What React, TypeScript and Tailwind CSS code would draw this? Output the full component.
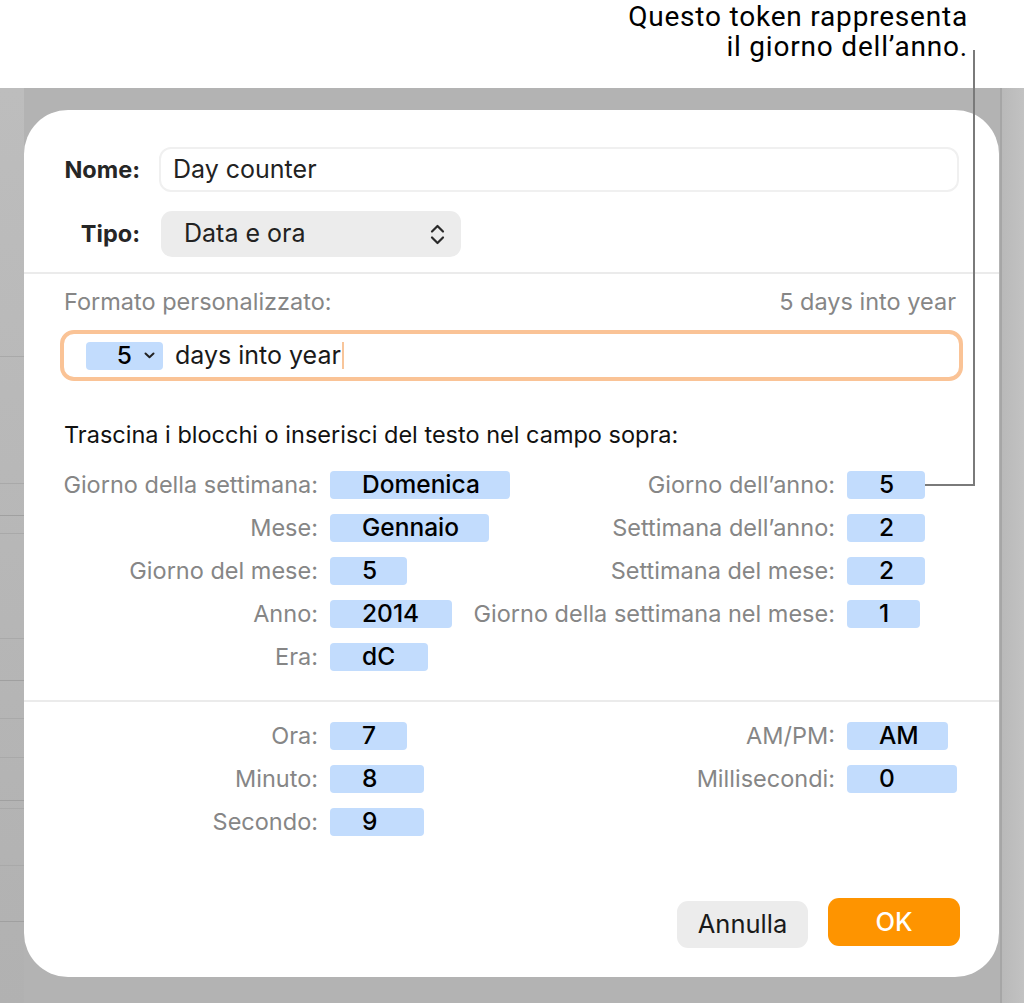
type Row = { l: string; t: string; tw: string; r?: string; rt?: string; rtw?: string };

const DATE_ROWS: Row[] = [
  { l: "Giorno della settimana:", t: "Domenica", tw: "w-[180px]", r: "Giorno dell’anno:", rt: "5", rtw: "w-[78px]" },
  { l: "Mese:", t: "Gennaio", tw: "w-[159px]", r: "Settimana dell’anno:", rt: "2", rtw: "w-[78px]" },
  { l: "Giorno del mese:", t: "5", tw: "w-[77px]", r: "Settimana del mese:", rt: "2", rtw: "w-[78px]" },
  { l: "Anno:", t: "2014", tw: "w-[122px]", r: "Giorno della settimana nel mese:", rt: "1", rtw: "w-[73px]" },
  { l: "Era:", t: "dC", tw: "w-[98px]" },
];

const TIME_ROWS: Row[] = [
  { l: "Ora:", t: "7", tw: "w-[77px]", r: "AM/PM:", rt: "AM", rtw: "w-[101px]" },
  { l: "Minuto:", t: "8", tw: "w-[94px]", r: "Millisecondi:", rt: "0", rtw: "w-[110px]" },
  { l: "Secondo:", t: "9", tw: "w-[94px]" },
];

function Token({ children, w }: { children: React.ReactNode; w: string }) {
  return (
    <span className={`flex h-[28px] items-center rounded-[4px] bg-[#c2dcfd] pl-[32px] text-[24.5px] font-medium text-black ${w}`}>
      {children}
    </span>
  );
}

function TokenGrid({ rows }: { rows: Row[] }) {
  return (
    <div className="grid grid-cols-[294px_minmax(0,1fr)_auto_152px] auto-rows-[43px] items-center gap-x-[12px]">
      {rows.map((r) => (
        <div key={r.l} className="contents">
          <span className="whitespace-nowrap text-right text-[23.5px] text-[#868686]">{r.l}</span>
          <Token w={r.tw}>{r.t}</Token>
          <span className="whitespace-nowrap text-right text-[23.5px] text-[#868686]">{r.r ?? ""}</span>
          {r.rt ? <Token w={r.rtw ?? ""}>{r.rt}</Token> : <span />}
        </div>
      ))}
    </div>
  );
}

// faint rows of the spreadsheet behind the sheet
const BG_LINES = [268, 395, 427, 445, 550, 592, 630, 669, 712, 720, 777, 833];

export default function App() {
  return (
    <div className="relative h-[1003px] w-[1024px] overflow-hidden bg-white font-[Inter,'Liberation_Sans',sans-serif]">
      {/* callout */}
      <div className="h-[88px] pr-[56px] pt-[2px] text-right font-[Roboto,'Liberation_Sans',sans-serif] text-[28px] leading-[30px] tracking-[0.8px] text-black">
        <p>
          Questo token rappresenta
          <br />
          il giorno dell’anno.
        </p>
      </div>

      <div className="flex h-[915px] bg-[#b3b3b3]">
        <div className="flex w-[24px] flex-col bg-gradient-to-b from-[#bdbdbd] to-[#b1b1b1]">
          {BG_LINES.map((y, i) => (
            <div key={y} className={i % 3 === 2 ? "h-[1px] bg-[#a0a0a0]" : "h-[1px] bg-[#a9a9a9]"} style={{ marginTop: i === 0 ? y : y - BG_LINES[i - 1] - 1 }} />
          ))}
        </div>

        <div className="mt-[22px] flex h-[867px] w-[975px] flex-col rounded-[44px] bg-white">
          {/* name / type */}
          <div className="flex items-center pr-[40px] pt-[37px]">
            <span className="w-[116px] text-right text-[23.5px] font-bold text-[#262626]">Nome:</span>
            <div className="ml-[19px] flex h-[45px] flex-1 items-center rounded-[12px] border-2 border-[#f0f0f0] pl-[12px] text-[25px] text-[#222]">
              Day counter
            </div>
          </div>
          <div className="mt-[19px] flex items-center">
            <span className="w-[116px] text-right text-[23.5px] font-bold text-[#262626]">Tipo:</span>
            <div className="ml-[21px] flex h-[46px] w-[300px] items-center justify-between rounded-[11px] bg-[#ececec] pl-[23px] pr-[16px] text-[25px] text-[#222]">
              Data e ora
              <svg width="15" height="21" viewBox="0 0 15 21" fill="none">
                <path d="M2 7.5 L7.5 2 L13 7.5 M2 13.5 L7.5 19 L13 13.5" stroke="#2a2a2a" strokeWidth="2.2" strokeLinecap="round" strokeLinejoin="round" />
              </svg>
            </div>
          </div>

          <div className="mt-[15px] h-[2px] bg-[#ebebeb]" />

          {/* custom format */}
          <div className="mt-[14px] flex h-[28px] items-center justify-between pl-[40px] pr-[43px] text-[23.5px] text-[#868686]">
            <span>Formato personalizzato:</span>
            <span>5 days into year</span>
          </div>
          <div className="mx-[36px] mt-[14px] flex h-[51px] items-center rounded-[14px] border-4 border-[#fac396] pl-[22px]">
            <span className="flex h-[28px] w-[77px] items-center justify-end gap-[12px] rounded-[4px] bg-[#c2dcfd] pr-[8px] text-[24.5px] font-medium text-black">
              5
              <svg width="11" height="7" viewBox="0 0 11 7" fill="none">
                <path d="M1.5 1.5 L5.5 5.2 L9.5 1.5" stroke="#222" strokeWidth="2" strokeLinecap="round" strokeLinejoin="round" />
              </svg>
            </span>
            <span className="ml-[12px] text-[25px] text-[#1a1a1a]">days into year</span>
            <span className="ml-[1px] h-[27px] w-[2px] bg-[#f8c59a]" />
          </div>

          <p className="mt-[40px] h-[28px] whitespace-nowrap pl-[40px] text-[23.5px] leading-[28px] text-[#111]">
            Trascina i blocchi o inserisci del testo nel campo sopra:
          </p>

          <div className="mt-[14px]">
            <TokenGrid rows={DATE_ROWS} />
          </div>

          <div className="mt-[22px] h-[2px] bg-[#ebebeb]" />

          <div className="mt-[12px]">
            <TokenGrid rows={TIME_ROWS} />
          </div>

          <div className="mt-auto flex items-start justify-end gap-[20px] pb-[29px] pr-[39px]">
            <button className="mt-[3px] h-[47px] w-[131px] rounded-[11px] bg-[#ececec] text-[25.5px] text-[#1a1a1a]">Annulla</button>
            <button className="h-[48px] w-[132px] rounded-[11px] bg-[#fe9400] text-[25.5px] font-medium text-white">OK</button>
          </div>
        </div>

        <div className="ml-[1px] w-[24px] border-l-2 border-[#a6a6a6] bg-gradient-to-r from-[#b9b9b9] to-[#c2c2c2]" />
      </div>

      {/* callout leader line */}
      <svg className="pointer-events-none absolute left-0 top-0" width="1024" height="1003">
        <polyline points="974,50 974,485 925,485" fill="none" stroke="#7a7a7a" strokeWidth="2" />
      </svg>
    </div>
  );
}
